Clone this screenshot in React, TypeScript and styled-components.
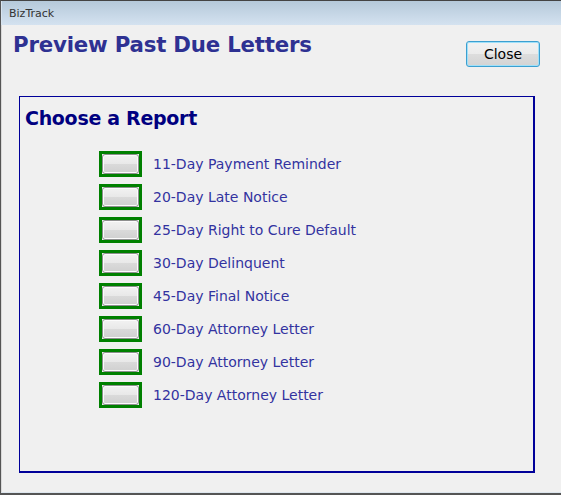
import React from "react";
import styled, { createGlobalStyle } from "styled-components";

const GlobalStyle = createGlobalStyle`
  html, body {
    margin: 0;
    padding: 0;
    background: #f0f0f0;
  }
`;

const Window = styled.div`
  width: 561px;
  height: 495px;
  box-sizing: border-box;
  display: flex;
  flex-direction: column;
  background: #f0f0f0;
  border-left: 1px solid #555;
  border-top: 1px solid #444;
  border-bottom: 2px solid #555;
  font-family: Tahoma, "DejaVu Sans", sans-serif;
`;

const TitleBar = styled.div`
  height: 24px;
  display: flex;
  align-items: center;
  padding-left: 7px;
  background: linear-gradient(to bottom, #b5c9da, #d4e2f0);
  color: #333;
  font-size: 11px;
  border-left: 1px solid #d7e3ee;
`;

const Content = styled.div`
  flex: 1;
  display: flex;
  flex-direction: column;
  padding: 0 26px 0 17px;
  border-left: 1px solid #d9d9d9;
  border-bottom: 1px solid #dde6ee;
`;

const Header = styled.div`
  display: flex;
  justify-content: space-between;
  align-items: flex-start;
  height: 71px;
`;

const Title = styled.h1`
  margin: 7px 0 0 -6px;
  font-size: 21.3px;
  font-weight: bold;
  color: #2e3192;
  letter-spacing: -0.2px;
`;

const CloseButton = styled.button`
  margin: 16px -5px 0 0;
  width: 74px;
  height: 26px;
  border: 1px solid #3c9fd0;
  border-radius: 3px;
  background: linear-gradient(to bottom, #f2f2f2 0%, #ebebeb 50%, #dddddd 51%, #d3d3d3 100%);
  box-shadow: inset 0 0 0 1px #9fe0f9;
  font-family: Tahoma, "DejaVu Sans", sans-serif;
  font-size: 14px;
  color: #000;
  padding: 0;
`;

const GroupBox = styled.div`
  height: 377px;
  box-sizing: border-box;
  border: 2px solid #000099;
  border-width: 1px 2px 2px 1px;
  padding: 10px 0 0 5px;
`;

const GroupTitle = styled.h2`
  margin: 0;
  font-size: 19px;
  font-weight: bold;
  color: #000080;
  letter-spacing: -0.3px;
`;

const List = styled.div`
  display: flex;
  flex-direction: column;
  gap: 7px;
  margin: 22px 0 0 74px;
`;

const Row = styled.div`
  display: flex;
  align-items: center;
  gap: 11px;
`;

const ButtonFrame = styled.div`
  width: 43px;
  height: 26px;
  box-sizing: border-box;
  border: 3px solid #008000;
  display: flex;
`;

const ReportButton = styled.button`
  flex: 1;
  margin: 0;
  padding: 0;
  border: 1px solid #8e8f8f;
  border-radius: 3px;
  background: linear-gradient(to bottom, #f2f2f2 0%, #e8e8e8 50%, #dadada 51%, #d0d0d0 100%);
  box-shadow: inset 0 0 0 1px #fcfcfc;
`;

const Label = styled.span`
  font-size: 14px;
  color: #3333a0;
`;

const reports = [
  "11-Day Payment Reminder",
  "20-Day Late Notice",
  "25-Day Right to Cure Default",
  "30-Day Delinquent",
  "45-Day Final Notice",
  "60-Day Attorney Letter",
  "90-Day Attorney Letter",
  "120-Day Attorney Letter",
];

export default function App() {
  return (
    <>
      <GlobalStyle />
      <Window>
        <TitleBar>BizTrack</TitleBar>
        <Content>
          <Header>
            <Title>Preview Past Due Letters</Title>
            <CloseButton>Close</CloseButton>
          </Header>
          <GroupBox>
            <GroupTitle>Choose a Report</GroupTitle>
            <List>
              {reports.map((r) => (
                <Row key={r}>
                  <ButtonFrame>
                    <ReportButton />
                  </ButtonFrame>
                  <Label>{r}</Label>
                </Row>
              ))}
            </List>
          </GroupBox>
        </Content>
      </Window>
    </>
  );
}
